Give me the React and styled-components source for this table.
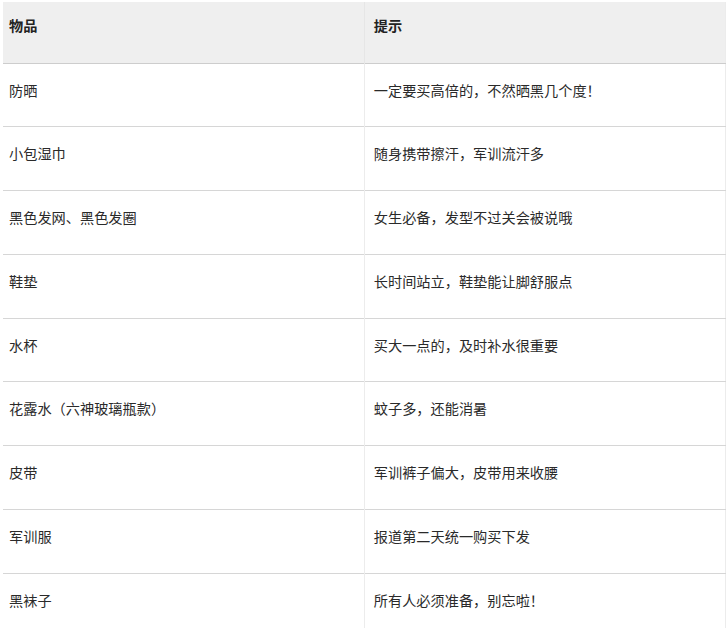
import React from "react";
import styled, { createGlobalStyle } from "styled-components";

const GlobalStyle = createGlobalStyle`
  html, body {
    margin: 0;
    padding: 0;
    background: #fff;
  }
  body {
    font-family: "Noto Sans CJK SC", "Noto Sans", sans-serif;
    color: #333;
  }
`;

const Page = styled.div`
  padding: 2px 2px 0 3px;
  height: 626px;
  overflow: hidden;
`;

const Table = styled.table`
  width: 723px;
  border-collapse: collapse;
  table-layout: fixed;
  border-right: 1px solid #ececec;
`;

const HeadRow = styled.tr`
  background: #efefef;
  height: 61px;
  border-bottom: 1px solid #cdcdcd;
`;

const Row = styled.tr`
  height: 63.75px;
  border-bottom: 1px solid #d6d6d6;
`;

const Th = styled.th`
  text-align: left;
  vertical-align: top;
  font-size: 14.2px;
  font-weight: 700;
  line-height: 20px;
  color: #222;
  padding: 13px 0 0 ${(p) => (p.$right ? "9px" : "6px")};
  border-left: ${(p) => (p.$right ? "1px solid #e6e6e6" : "none")};
`;

const Td = styled.td`
  vertical-align: top;
  font-size: 14.2px;
  line-height: 20px;
  color: #2a2a2a;
  padding: 16px 0 0 ${(p) => (p.$right ? "9px" : "6px")};
  border-left: ${(p) => (p.$right ? "1px solid #ececec" : "none")};
`;

const items = [
  ["防晒", "一定要买高倍的，不然晒黑几个度！"],
  ["小包湿巾", "随身携带擦汗，军训流汗多"],
  ["黑色发网、黑色发圈", "女生必备，发型不过关会被说哦"],
  ["鞋垫", "长时间站立，鞋垫能让脚舒服点"],
  ["水杯", "买大一点的，及时补水很重要"],
  ["花露水（六神玻璃瓶款）", "蚊子多，还能消暑"],
  ["皮带", "军训裤子偏大，皮带用来收腰"],
  ["军训服", "报道第二天统一购买下发"],
  ["黑袜子", "所有人必须准备，别忘啦！"],
];

export default function App() {
  return (
    <Page>
      <GlobalStyle />
      <Table>
        <thead>
          <HeadRow>
            <Th>物品</Th>
            <Th $right>提示</Th>
          </HeadRow>
        </thead>
        <tbody>
          {items.map(([name, tip]) => (
            <Row key={name}>
              <Td>{name}</Td>
              <Td $right>{tip}</Td>
            </Row>
          ))}
        </tbody>
      </Table>
    </Page>
  );
}
